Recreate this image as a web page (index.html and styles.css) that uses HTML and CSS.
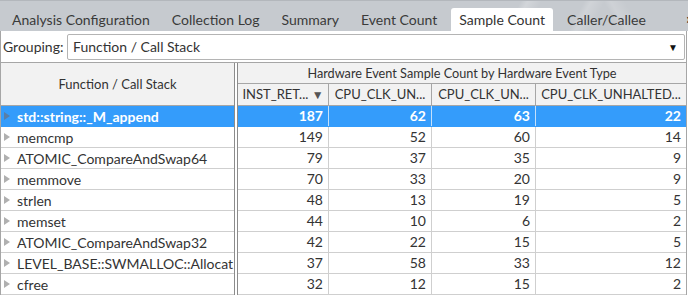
FILE: index.html
```html
<!DOCTYPE html>
<html lang="en">
<head>
  <meta charset="UTF-8">
  <meta name="viewport" content="width=device-width, initial-scale=1.0">
  <title>Sample Count</title>
  <link rel="stylesheet" href="styles.css">
</head>
<body>
  <div class="tabs">
    <div class="tab">Analysis Configuration</div>
    <div class="tab">Collection Log</div>
    <div class="tab">Summary</div>
    <div class="tab">Event Count</div>
    <div class="tab active">Sample Count</div>
    <div class="tab">Caller/Callee</div>
    <span class="tab-more">&raquo;</span>
  </div>

  <div class="panel">
    <div class="grouping">
      <span class="grouping-label">Grouping:</span>
      <div class="select">
        <span>Function / Call Stack</span>
        <span class="caret">&#9660;</span>
      </div>
    </div>

    <div class="grid">
      <!-- left pane: function names -->
      <div class="pane pane-left">
        <div class="head-left">Function / Call Stack</div>
        <div class="row sel"><span class="twisty"></span>std::string::_M_append</div>
        <div class="row"><span class="twisty"></span>memcmp</div>
        <div class="row"><span class="twisty"></span>ATOMIC_CompareAndSwap64</div>
        <div class="row"><span class="twisty"></span>memmove</div>
        <div class="row"><span class="twisty"></span>strlen</div>
        <div class="row"><span class="twisty"></span>memset</div>
        <div class="row"><span class="twisty"></span>ATOMIC_CompareAndSwap32</div>
        <div class="row"><span class="twisty"></span>LEVEL_BASE::SWMALLOC::Allocat</div>
        <div class="row"><span class="twisty"></span>cfree</div>
      </div>

      <!-- right pane: sample counts -->
      <div class="pane pane-right">
        <div class="head-group">Hardware Event Sample Count by Hardware Event Type</div>
        <div class="cols head-cols">
          <div>INST_RET... <span class="sort">&#9660;</span></div>
          <div>CPU_CLK_UN...</div>
          <div>CPU_CLK_UN...</div>
          <div>CPU_CLK_UNHALTED...</div>
        </div>
        <div class="cols nums sel"><div>187</div><div>62</div><div>63</div><div>22</div></div>
        <div class="cols nums"><div>149</div><div>52</div><div>60</div><div>14</div></div>
        <div class="cols nums"><div>79</div><div>37</div><div>35</div><div>9</div></div>
        <div class="cols nums"><div>70</div><div>33</div><div>20</div><div>9</div></div>
        <div class="cols nums"><div>48</div><div>13</div><div>19</div><div>5</div></div>
        <div class="cols nums"><div>44</div><div>10</div><div>6</div><div>2</div></div>
        <div class="cols nums"><div>42</div><div>22</div><div>15</div><div>5</div></div>
        <div class="cols nums"><div>37</div><div>58</div><div>33</div><div>12</div></div>
        <div class="cols nums"><div>32</div><div>12</div><div>15</div><div>2</div></div>
      </div>
    </div>
  </div>
</body>
</html>
```

FILE: styles.css
```css
/* Global */
body {
  margin: 0;
  width: 688px;
  height: 299px;
  overflow: hidden;
  font-family: Lato, "Open Sans", sans-serif;
  font-size: 14px;
  color: #333;
  background: #fff;
}

/* Tab bar */
.tabs {
  position: relative;
  display: flex;
  align-items: flex-end;
  gap: 6px;
  height: 31px;
  padding-left: 4px;
  box-sizing: border-box;
  border-top: 1px solid #b3b7bc;
  background-color: #c6cacf;
  background-image:
    linear-gradient(118deg, transparent 74%, rgba(255, 255, 255, 0.22) 75%, transparent 77%),
    linear-gradient(118deg, transparent 83%, rgba(255, 255, 255, 0.18) 84%, transparent 86%),
    linear-gradient(60deg, transparent 88%, rgba(255, 255, 255, 0.15) 89%, transparent 91%);
  overflow: hidden;
}

.tab {
  height: 23px;
  line-height: 23px;
  padding: 0 8px;
  color: #3a3a3a;
  white-space: nowrap;
  border-radius: 3px 3px 0 0;
}

.tab.active {
  background: #fff;
  color: #333;
}

.tab-more {
  position: absolute;
  right: -5px;
  bottom: 4px;
  font-size: 15px;
  font-weight: bold;
  color: #222;
}

/* Panel below tabs */
.panel {
  width: 687px;
  box-sizing: border-box;
  border-left: 1px solid #a6a6a6;
  border-right: 1px solid #a6a6a6;
}

.grouping {
  display: flex;
  align-items: center;
  height: 31px;
  padding-left: 2px;
}

.grouping-label {
  width: 64px;
}

.select {
  display: flex;
  justify-content: space-between;
  align-items: center;
  width: 618px;
  height: 26px;
  box-sizing: border-box;
  padding: 0 6px 0 5px;
  border: 1px solid #b4b4b4;
  border-radius: 2px;
}

.caret {
  font-size: 10px;
  color: #111;
}

/* Grid */
.grid {
  display: flex;
  border-top: 1px solid #a6a6a6;
}

.pane-left {
  width: 234px;
  box-sizing: border-box;
  border-right: 1px solid #8c8c8c;
  margin-right: 2px;
}

.pane-right {
  flex: 1;
  border-left: 1px solid #8c8c8c;
}

.head-left {
  height: 43px;
  line-height: 42px;
  box-sizing: border-box;
  text-align: center;
  font-size: 13px;
  background: #f2f2f2;
  border-bottom: 1px solid #a6a6a6;
}

.head-group {
  height: 21px;
  line-height: 20px;
  box-sizing: border-box;
  text-align: center;
  font-size: 12.7px;
  background: #f2f2f2;
  border-bottom: 1px solid #a6a6a6;
}

.row {
  display: flex;
  align-items: center;
  height: 21px;
  box-sizing: border-box;
  padding-left: 3px;
  border-bottom: 1px solid #cfcfcf;
  white-space: nowrap;
  overflow: hidden;
}

.twisty {
  flex: none;
  width: 0;
  height: 0;
  margin-right: 7px;
  border-left: 6px solid #b0b0b0;
  border-top: 4px solid transparent;
  border-bottom: 4px solid transparent;
}

.cols {
  display: grid;
  grid-template-columns: 91px 103px 104px 1fr;
  height: 21px;
  box-sizing: border-box;
  border-bottom: 1px solid #cfcfcf;
}

.cols div {
  border-right: 1px solid #cfcfcf;
  line-height: 20px;
  white-space: nowrap;
  overflow: hidden;
}

.cols div:last-child {
  border-right: none;
}

.head-cols {
  height: 22px;
  background: #f2f2f2;
  border-bottom: 1px solid #a6a6a6;
}

.head-cols div {
  text-align: center;
  font-size: 13px;
  line-height: 21px;
  border-right-color: #a6a6a6;
}

.sort {
  font-size: 12px;
  color: #555;
}

.nums div {
  text-align: right;
  padding-right: 5px;
}

/* Selected row */
.sel {
  background: #349cfb;
  border-bottom-color: #349cfb;
  color: #fff;
  font-weight: bold;
}

.sel div {
  border-right-color: #c4e0fb;
}

.sel .twisty {
  border-left-color: #5a7ea6;
}
```
